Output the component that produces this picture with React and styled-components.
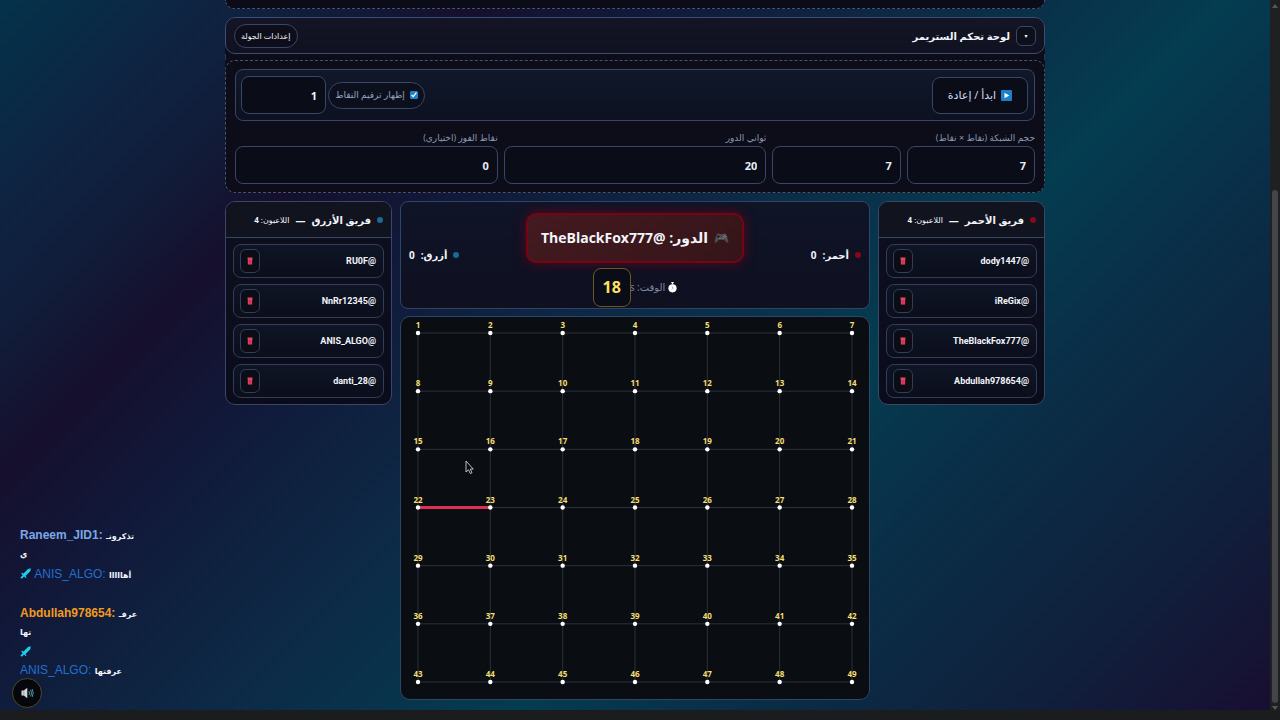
import React from "react";
import styled, { createGlobalStyle } from "styled-components";

const GlobalStyle = createGlobalStyle`
  * { box-sizing: border-box; }
  body { margin: 0; background: #1a1c1d; }
  button, input { font: inherit; color: inherit; }
`;

const line = "#3a4666";

const Frame = styled.div`
  display: grid;
  grid-template-columns: 1fr 10px;
  grid-template-rows: 1fr 10px;
  min-height: 100vh;
  background: #1a1c1d;
  color: #f2f5fb;
  font: 700 10px/16px "Open Sans", "DejaVu Sans", sans-serif;
`;

const Scene = styled.div`
  position: relative;
  padding-bottom: 10px;
  background: linear-gradient(135deg, #04324a 0%, #0f2240 12%, #111b38 18%, #160f2d 24%, #11193a 33%, #0d2945 46%, #043c50 62%, #0a2e47 73%, #101f3b 88%, #180e31 100%);
`;

const ScrollTrack = styled.div`
  display: flex;
  flex-direction: column;
  align-items: center;
  justify-content: space-between;
  padding: 4px 0 0;
  background: #1f2021;
`;

const Thumb = styled.div`
  flex: 1;
  width: 6px;
  margin: 182px 0 3px;
  border-radius: 3px;
  background: #434548;
`;

const Arrow = styled.svg`
  width: 6px;
  height: 4px;
  fill: #56585a;
`;

const Wrap = styled.main`
  display: flex;
  flex-direction: column;
  gap: 8px;
  max-width: 820px;
  margin: 0 auto;
`;

const PreviousPanel = styled.div`
  height: 9px;
  border: 1px dashed #45546f;
  border-top: 0;
  border-radius: 0 0 10px 10px;
  background: #0c0c18;
`;

const Panel = styled.section`
  border-radius: 10px;
  background: #0c0d19;
`;

const PanelHeader = styled.header`
  display: flex;
  align-items: center;
  gap: 6px;
  height: 37px;
  padding: 0 8px;
  border: 1px solid #3a4d72;
  border-radius: 10px;
  background: linear-gradient(#131425, #111220);
`;

const Toggle = styled.button`
  width: 20px;
  height: 20px;
  padding: 0;
  border: 1px solid ${line};
  border-radius: 6px;
  background: #0d0f1b;
  font-size: 6px;
  line-height: 16px;
`;

const PanelTitle = styled.h2`
  flex: 1;
  margin: 0;
  font-size: 10px;
`;

const Chip = styled.span`
  padding: 3px 6px;
  border: 1px solid ${line};
  border-radius: 12px;
  background: #0d0e1a;
  font-weight: 400;
  font-size: 8px;
`;

const Spine = styled.div`
  height: 6px;
  border: solid #2b3a5c;
  border-width: 0 1px;
`;

const PanelBody = styled.div`
  display: flex;
  flex-direction: column;
  gap: 9px;
  padding: 8px 9px;
  border: 1px dashed #45546f;
  border-radius: 10px;
`;

const Toolbar = styled.div`
  display: flex;
  align-items: center;
  gap: 2px;
  padding: 6px 6px 6px 5px;
  border: 1px solid ${line};
  border-radius: 8px;
  background: linear-gradient(#101829, #0d1121);
`;

const StartButton = styled.button`
  display: flex;
  align-items: center;
  justify-content: center;
  gap: 5px;
  width: 96px;
  height: 37px;
  margin-left: auto;
  padding: 0;
  border: 1px solid ${line};
  border-radius: 8px;
  background: #0a0d18;
  color: #d5dcf6;
  font-weight: 400;
  font-size: 11px;
`;

const CheckPill = styled.label`
  display: flex;
  align-items: center;
  justify-content: center;
  gap: 5px;
  width: 97px;
  height: 27px;
  border: 1px solid ${line};
  border-radius: 14px;
  background: #0c101d;
  color: #94a2c0;
  font-weight: 400;
  font-size: 9px;
  white-space: nowrap;

  input {
    width: 8px;
    height: 8px;
    margin: 0;
    accent-color: #1b82cf;
  }
`;

const NumberBox = styled.input`
  width: ${(p) => p.$width || "100%"};
  height: 38px;
  min-width: 0;
  padding: 0 8px;
  border: 1px solid ${line};
  border-radius: 8px;
  outline: 0;
  background: #0a0d18;
  font-size: 11px;
  text-align: right;
`;

const Fields = styled.div`
  display: grid;
  grid-template-columns: repeat(3, 1fr);
  gap: 6px;
`;

const Field = styled.div`
  min-width: 0;
  color: #8b99b5;
  font-weight: 400;
  font-size: 9px;

  label { display: block; }
  input { color: #e8edf7; font-weight: 700; }
`;

const Pair = styled.div`
  display: flex;
  gap: 6px;
`;

const Arena = styled.div`
  display: grid;
  grid-template-columns: 167px 1fr 167px;
  align-items: start;
  gap: 8px;
`;

const Team = styled.section`
  overflow: hidden;
  border: 1px solid ${line};
  border-radius: 10px;
  background: linear-gradient(#0d0f1f, #0b0c1b);
`;

const TeamHeader = styled.header`
  display: flex;
  align-items: center;
  gap: 6px;
  height: 36px;
  padding: 0 8px;
  border-bottom: 1px solid ${line};
  background: #11131f;
`;

const TeamName = styled.h3`
  margin: 0;
  font-size: 10px;
`;

const Count = styled.span`
  font-weight: 400;
  font-size: 8px;
  b { font-weight: 700; }
`;

const Dot = styled.i`
  width: 6px;
  height: 6px;
  border-radius: 50%;
  background: ${(p) => p.$color};
`;

const Players = styled.ul`
  display: flex;
  flex-direction: column;
  gap: 6px;
  margin: 0;
  padding: 6px 7px;
  list-style: none;
`;

const Player = styled.li`
  display: flex;
  align-items: center;
  justify-content: space-between;
  height: 34px;
  padding: 0 7px 0 6px;
  border: 1px solid #323e59;
  border-radius: 8px;
  background: linear-gradient(#0f1525, #0b0e1b);
  font-family: Roboto, "DejaVu Sans", sans-serif;
  font-size: 9px;
`;

const RemoveButton = styled.button`
  display: grid;
  place-items: center;
  width: 20px;
  height: 24px;
  padding: 0;
  border: 1px solid #323e59;
  border-radius: 6px;
  background: #0a0c16;
`;

const Center = styled.div`
  display: flex;
  flex-direction: column;
  gap: 7px;
`;

const Status = styled.section`
  display: flex;
  align-items: center;
  justify-content: space-between;
  height: 108px;
  padding: 0 8px;
  border: 1px solid #2f4469;
  border-radius: 8px;
  background: linear-gradient(#0f1427, #0f1020);
`;

const Score = styled.div`
  display: flex;
  align-items: center;
  gap: 6px;
  width: 80px;
  justify-content: ${(p) => (p.$end ? "flex-end" : "flex-start")};
`;

const TurnColumn = styled.div`
  display: flex;
  flex-direction: column;
  align-items: center;
  gap: 5px;
  padding-top: 9px;
`;

const Turn = styled.div`
  display: flex;
  align-items: center;
  justify-content: center;
  gap: 6px;
  width: 218px;
  height: 50px;
  border: 2px solid #750516;
  border-radius: 10px;
  background: linear-gradient(135deg, #431a20, #351519);
  box-shadow: 0 0 12px #5b061a;
  font-size: 14px;
  white-space: nowrap;
`;

const Timer = styled.div`
  display: flex;
  align-items: center;
  gap: 3px;
  color: #7f8ba2;
  font-weight: 400;
`;

const TimeLeft = styled.span`
  display: inline-grid;
  place-items: center;
  width: 38px;
  height: 39px;
  margin-right: -4px;
  border: 1px solid #665a27;
  border-radius: 8px;
  background: #0a0d17;
  color: #ffe066;
  font-weight: 700;
  font-size: 16px;
`;

const Board = styled.svg`
  display: block;
  width: 100%;
  border: 1px solid #2f4469;
  border-radius: 10px;
  background: #0a0d12;
  font-size: 8px;
`;

const Chat = styled.aside`
  position: absolute;
  bottom: 31px;
  left: 20px;
  display: flex;
  flex-direction: column;
  gap: 3px;
  font: 700 12px/18px "Liberation Sans", "DejaVu Sans", sans-serif;
`;

const Message = styled.p`
  height: 36px;
  margin: 0;
  white-space: nowrap;

  svg { vertical-align: -1px; }
`;

const Author = styled.span`
  color: ${(p) => p.$color};
  font-weight: ${(p) => (p.$light ? 400 : 700)};
`;

const ChatText = styled.bdi`
  font-size: 8px;
  line-height: 0;
`;

const SoundButton = styled.button`
  position: absolute;
  bottom: 2px;
  left: 12px;
  display: grid;
  place-items: center;
  width: 30px;
  height: 30px;
  padding: 0;
  border: 1px solid #4f4a1f;
  border-radius: 50%;
  background: #05070d;
`;

const Trash = () => (
  <svg width="6" height="8" viewBox="0 0 6 8" aria-hidden="true">
    <path d="M0.5.500h5v1.500h-5zM0.700 2h4.600l-.2 5.500H.9z" fill="#e84263" />
    <path d="M2.2 3v3.6M3.8 3v3.6" stroke="#9c2c49" strokeWidth="0.6" />
  </svg>
);

const Play = () => (
  <svg width="11" height="11" viewBox="0 0 11 11" aria-hidden="true">
    <rect width="11" height="11" rx="1" fill="#1c7fc8" />
    <path d="M3.5 2.8 8.3 5.5 3.5 8.2z" fill="#fff" />
  </svg>
);

const Gamepad = () => (
  <svg width="15" height="12" viewBox="0 0 16 12" aria-hidden="true">
    <path d="M4 1.2C5 .6 5.8 1.5 6.5 1.6h3C10.2 1.5 11 .6 12 1.2c1.800 .8 3 5.200 3.400 8.300.2 2-1.500 2.200-2.400 1L11 8H5L3 10.500c-.9 1.200-2.600 1-2.400-1C1 6.400 2.200 2 4 1.200z" fill="#504e50" stroke="#242124" strokeWidth="0.5" />
    <path d="M4.500 3v3M3 4.500h3" stroke="#1e1c1e" strokeWidth="1" />
    <g fill="#858286">
      <circle cx="11.500" cy="3.200" r=".7" />
      <circle cx="11.500" cy="5.800" r=".7" />
      <circle cx="10.200" cy="4.500" r=".7" />
      <circle cx="12.800" cy="4.500" r=".7" />
      <circle cx="6.300" cy="6.500" r=".8" />
      <circle cx="9.300" cy="6.500" r=".8" />
    </g>
  </svg>
);

const Stopwatch = () => (
  <svg width="9" height="11" viewBox="0 0 9 11" aria-hidden="true">
    <path d="M3.300 0h2.400v1.300H5v1h-1v-1h-.7z" fill="#fff" />
    <circle cx="4.500" cy="6.300" r="4.100" fill="#fff" />
    <path d="M4 4.500 5 6.300 4 7.500" stroke="#7d8088" strokeWidth=".7" fill="none" />
  </svg>
);

const Sword = () => (
  <svg width="11" height="11" viewBox="0 0 11 11" aria-hidden="true">
    <path d="M10.800.3 10.300 3.200 5.500 8 6.600 9.200 5.700 10 4 8.500 1.800 10.700.4 9.400 2.700 7.200 1.200 5.500 2.100 4.600 3.300 5.700 8 .9z" fill="#1fd0ee" />
  </svg>
);

const Speaker = () => (
  <svg width="13" height="12" viewBox="0 0 13 12" aria-hidden="true">
    <path d="M.5 3.500h2.300L6.300.8v10.400L2.800 8.500H.5z" fill="#d3d7da" />
    <path d="M2.800 3.500v5" stroke="#81898e" strokeWidth=".7" />
    <path d="M8 4q1 2 0 4M9.600 2.600q1.900 3.400 0 6.800M11.200 2q2 4 0 8" fill="none" stroke="#3d9aa0" strokeWidth="1" />
  </svg>
);

const teams = {
  red: { name: "فريق الأحمر", color: "#8a0718", players: ["dody1447", "iReGix", "TheBlackFox777", "Abdullah978654"] },
  blue: { name: "فريق الأزرق", color: "#176d98", players: ["RU0F", "NnRr12345", "ANIS_ALGO", "danti_28"] },
};

function TeamCard({ team }) {
  return (
    <Team>
      <TeamHeader>
        <Dot $color={team.color} />
        <TeamName>{team.name}</TeamName>
        <span>—</span>
        <Count>
          اللاعبون: <b>{team.players.length}</b>
        </Count>
      </TeamHeader>
      <Players>
        {team.players.map((name) => (
          <Player key={name}>
            <span>@{name}</span>
            <RemoveButton aria-label={`حذف ${name}`}>
              <Trash />
            </RemoveButton>
          </Player>
        ))}
      </Players>
    </Team>
  );
}

const size = 7;
const steps = Array.from({ length: size }, (_, i) => i);
const px = (c) => 17 + (c * 434) / (size - 1);
const py = (r) => 16 + (r * 349) / (size - 1);

function DotsBoard() {
  return (
    <Board viewBox="0 0 468 382" direction="ltr" role="img" aria-label="شبكة النقاط">
      <g stroke="#2c303b" strokeWidth="1">
        {steps.map((i) => (
          <React.Fragment key={i}>
            <path d={`M${px(0)} ${py(i)}H${px(size - 1)}`} />
            <path d={`M${px(i)} ${py(0)}V${py(size - 1)}`} />
          </React.Fragment>
        ))}
      </g>
      <path d={`M${px(0)} ${py(3)}H${px(1)}`} stroke="#dc3152" strokeWidth="3" />
      {steps.map((r) =>
        steps.map((c) => (
          <g key={`${r}-${c}`}>
            <circle cx={px(c)} cy={py(r)} r="2.200" fill="#fff" />
            <text x={px(c)} y={py(r) - 5} textAnchor="middle" fill="#f5df72">
              {r * size + c + 1}
            </text>
          </g>
        ))
      )}
      <path d="M65 144v11l2.500-2.200 1.800 3.700 1.700-.8-1.700-3.600h3z" fill="#0a0d12" stroke="#e6e6e6" strokeWidth=".8" />
    </Board>
  );
}

export default function App() {
  return (
    <Frame>
      <GlobalStyle />
      <Scene>
        <Wrap dir="rtl">
          <PreviousPanel />
          <Panel>
            <PanelHeader>
              <Toggle aria-label="طي اللوحة">▾</Toggle>
              <PanelTitle>لوحة تحكم الستريمر</PanelTitle>
              <Chip>إعدادات الجولة</Chip>
            </PanelHeader>
            <Spine />
            <PanelBody>
              <Toolbar>
                <StartButton>
                  <Play />
                  ابدأ / إعادة
                </StartButton>
                <CheckPill>
                  <input type="checkbox" defaultChecked />
                  إظهار ترقيم النقاط
                </CheckPill>
                <NumberBox $width="85px" defaultValue="1" aria-label="الجولة" />
              </Toolbar>
              <Fields>
                <Field>
                  <label htmlFor="cols">حجم الشبكة (نقاط × نقاط)</label>
                  <Pair>
                    <NumberBox id="cols" defaultValue="7" />
                    <NumberBox defaultValue="7" aria-label="عدد الصفوف" />
                  </Pair>
                </Field>
                <Field>
                  <label htmlFor="seconds">ثواني الدور</label>
                  <NumberBox id="seconds" defaultValue="20" />
                </Field>
                <Field>
                  <label htmlFor="goal">نقاط الفوز (اختياري)</label>
                  <NumberBox id="goal" defaultValue="0" />
                </Field>
              </Fields>
            </PanelBody>
          </Panel>
          <Arena>
            <TeamCard team={teams.red} />
            <Center>
              <Status>
                <Score>
                  <Dot $color={teams.red.color} />
                  <span>أحمر:</span>
                  <span>0</span>
                </Score>
                <TurnColumn>
                  <Turn>
                    <Gamepad />
                    <span>الدور: @TheBlackFox777</span>
                  </Turn>
                  <Timer>
                    <Stopwatch />
                    <span>الوقت: s</span>
                    <TimeLeft>18</TimeLeft>
                  </Timer>
                </TurnColumn>
                <Score $end>
                  <Dot $color={teams.blue.color} />
                  <span>أزرق:</span>
                  <span>0</span>
                </Score>
              </Status>
              <DotsBoard />
            </Center>
            <TeamCard team={teams.blue} />
          </Arena>
        </Wrap>
        <Chat>
          <Message>
            <Author $color="#7ba7e6">Raneem_JID1:</Author> <ChatText>تذكرونـ</ChatText>
            <br />
            <ChatText>ي</ChatText>
          </Message>
          <Message>
            <Sword /> <Author $color="#2370cf" $light>ANIS_ALGO:</Author> <ChatText>أهااااا</ChatText>
          </Message>
          <Message>
            <Author $color="#f29a1f">Abdullah978654:</Author> <ChatText>عرفـ</ChatText>
            <br />
            <ChatText>تها</ChatText>
          </Message>
          <Message>
            <Sword />
            <br />
            <Author $color="#2370cf" $light>ANIS_ALGO:</Author> <ChatText>عرفتها</ChatText>
          </Message>
        </Chat>
        <SoundButton aria-label="الصوت">
          <Speaker />
        </SoundButton>
      </Scene>
      <ScrollTrack>
        <Arrow viewBox="0 0 6 4"><path d="M3 0 6 4H0z" /></Arrow>
        <Thumb />
        <Arrow viewBox="0 0 6 4"><path d="M0 0h6L3 4z" /></Arrow>
      </ScrollTrack>
    </Frame>
  );
}
